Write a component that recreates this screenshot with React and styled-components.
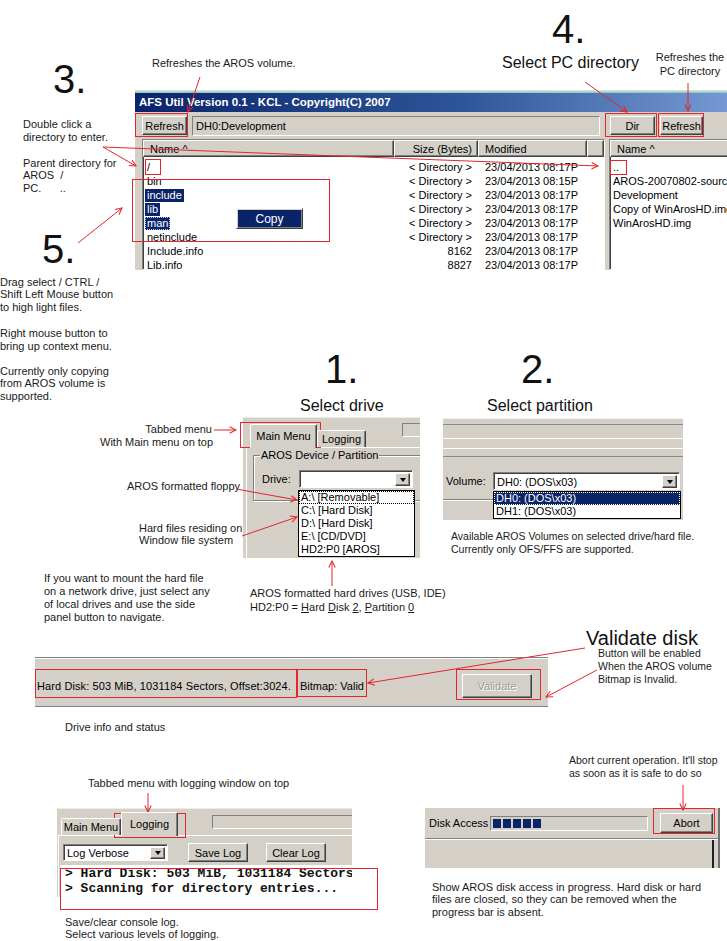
import React from "react";
import styled, { createGlobalStyle, css } from "styled-components";

const RED = "#e2262c";
const FACE = "#d4d0c8";
const NAVY = "#0a246a";

const GlobalStyle = createGlobalStyle`
  html, body { margin: 0; padding: 0; background: #fff; }
  body { font-family: "Liberation Sans", Arial, sans-serif; font-size: 11px; color: #000; }
  * { box-sizing: border-box; }
`;

const raised = css`
  background: ${FACE};
  border: 1px solid;
  border-color: #fff #404040 #404040 #fff;
  box-shadow: inset -1px -1px 0 #808080;
`;

const sunken = css`
  border: 1px solid;
  border-color: #808080 #fff #fff #808080;
  box-shadow: inset 1px 1px 0 #404040;
`;

// ---------- canvas + annotations ----------

const Canvas = styled.div`
  position: relative;
  width: 727px;
  height: 941px;
  overflow: hidden;
  background: #fff;
`;

const Step = styled.div`
  position: absolute;
  left: ${(p) => p.$x}px;
  top: ${(p) => p.$y}px;
  font-size: 40px;
  line-height: 40px;
  color: #111;
`;

const Heading = styled.div`
  position: absolute;
  left: ${(p) => p.$x}px;
  top: ${(p) => p.$y}px;
  font-size: ${(p) => p.$fs || 16}px;
  line-height: ${(p) => (p.$fs || 16) + 2}px;
  color: #111;
  white-space: nowrap;
`;

const Note = styled.div`
  position: absolute;
  left: ${(p) => p.$x}px;
  top: ${(p) => p.$y}px;
  font-size: ${(p) => p.$fs || 11}px;
  line-height: ${(p) => p.$lh || 13}px;
  white-space: pre;
  color: #1a1a1a;
  text-align: ${(p) => p.$align || "left"};
  ${(p) => p.$w && css`width: ${p.$w}px;`}
`;

const Key = styled.span`
  text-decoration: underline;
  text-underline-offset: 1px;
`;

const RedBox = styled.div`
  position: absolute;
  left: ${(p) => p.$x}px;
  top: ${(p) => p.$y}px;
  width: ${(p) => p.$w}px;
  height: ${(p) => p.$h}px;
  border: 1px solid ${RED};
  pointer-events: none;
`;

const ArrowLayer = styled.svg`
  position: absolute;
  left: 0;
  top: 0;
  pointer-events: none;
`;

// ---------- shared win2000 widgets ----------

const Button = styled.div`
  ${raised};
  flex-shrink: 0;
  width: ${(p) => p.$w}px;
  height: ${(p) => p.$h || 19}px;
  margin-left: ${(p) => p.$ml || 0}px;
  margin-right: ${(p) => p.$mr || 0}px;
  display: flex;
  align-items: center;
  justify-content: center;
  font-size: 11px;
  color: ${(p) => (p.$disabled ? "#a19d95" : "#000")};
  text-shadow: ${(p) => (p.$disabled ? "1px 1px 0 #fff" : "none")};
`;

const Combo = styled.div`
  ${sunken};
  background: #fff;
  flex-shrink: 0;
  width: ${(p) => p.$w}px;
  height: ${(p) => p.$h || 18}px;
  display: flex;
  align-items: stretch;
  padding: 2px 2px 1px 3px;
  font-size: 11px;
`;

const ComboText = styled.span`
  flex: 1;
  display: flex;
  align-items: center;
  white-space: nowrap;
  overflow: hidden;
`;

const DropBtn = styled.span`
  ${raised};
  width: 15px;
  display: flex;
  align-items: center;
  justify-content: center;
  &::after {
    content: "";
    border-left: 3.5px solid transparent;
    border-right: 3.5px solid transparent;
    border-top: 4px solid #000;
  }
`;

const DropList = styled.div`
  position: absolute;
  left: ${(p) => p.$x}px;
  top: ${(p) => p.$y}px;
  width: ${(p) => p.$w}px;
  background: #fff;
  border: 1px solid #000;
  z-index: 3;
`;

const DropItem = styled.div`
  height: 13px;
  line-height: 13px;
  padding-left: 2px;
  font-size: 11px;
  white-space: nowrap;
  ${(p) =>
    p.$sel &&
    css`
      background: ${NAVY};
      color: #fff;
    `}
  ${(p) =>
    p.$focus &&
    css`
      outline: 1px dotted ${p.$sel ? "#fff" : "#000"};
      outline-offset: -1px;
    `}
`;

const Rule = styled.div`
  flex-shrink: 0;
  height: 1px;
  background: ${(p) => p.$c};
  margin-top: ${(p) => p.$mt || 0}px;
  width: ${(p) => (p.$w ? `${p.$w}px` : "auto")};
`;

const TabStrip = styled.div`
  position: relative;
  z-index: 1;
  height: 29px;
  display: flex;
  align-items: flex-end;
  padding-left: ${(p) => p.$pl}px;
`;

const Tab = styled.div`
  flex-shrink: 0;
  width: ${(p) => p.$w}px;
  height: ${(p) => (p.$active ? 24 : 17)}px;
  margin-bottom: ${(p) => (p.$active ? -1 : 0)}px;
  background: ${FACE};
  border-top: 1px solid #fff;
  border-left: 1px solid #fff;
  border-right: 1px solid #404040;
  box-shadow: inset -1px 0 0 #808080;
  border-radius: 2px 2px 0 0;
  display: flex;
  align-items: center;
  justify-content: center;
  padding-bottom: ${(p) => (p.$active ? 2 : 0)}px;
  font-size: 11px;
  white-space: nowrap;
`;

const TabField = styled.div`
  ${sunken};
  box-shadow: none;
  align-self: flex-start;
  flex-shrink: 0;
  margin-left: ${(p) => p.$ml}px;
  margin-top: ${(p) => p.$mt}px;
  width: ${(p) => p.$w}px;
  height: 14px;
`;

const TabPage = styled.div`
  flex: 1;
  margin-left: ${(p) => p.$ml}px;
  border-top: 1px solid #fff;
  border-left: 1px solid #fff;
  padding: 7px 0 0 ${(p) => p.$pl}px;
`;

// ---------- AFS main window ----------

const AppWindow = styled.div`
  position: absolute;
  left: 135px;
  top: 90px;
  width: 592px;
  height: 180px;
  background: ${FACE};
  display: flex;
  flex-direction: column;
  overflow: hidden;
`;

const FrameTop = styled.div`
  height: 3px;
  background: linear-gradient(#d6ebe7, #8fc3bd);
`;

const TitleBar = styled.div`
  height: 19px;
  padding-left: 4px;
  background: linear-gradient(90deg, #0a246a 0%, #2d5599 55%, #7599d2 100%);
  color: #fff;
  font-weight: bold;
  font-size: 11.5px;
  line-height: 19px;
  white-space: nowrap;
`;

const Toolbar = styled.div`
  height: 27px;
  display: flex;
  align-items: center;
  padding-left: 7px;
`;

const PathField = styled.div`
  ${sunken};
  box-shadow: none;
  flex-shrink: 0;
  width: 408px;
  height: 20px;
  margin-left: 5px;
  padding-left: 3px;
  display: flex;
  align-items: center;
  font-size: 11px;
`;

const Panes = styled.div`
  flex: 1;
  display: flex;
  padding-left: 7px;
  min-height: 0;
`;

const ListView = styled.div`
  ${sunken};
  position: relative;
  background: #fff;
  flex: 0 0 ${(p) => p.$w}px;
  margin-left: ${(p) => p.$ml || 0}px;
  overflow: hidden;
`;

const HeaderRow = styled.div`
  display: grid;
  grid-template-columns: ${(p) => p.$cols};
  height: 17px;
`;

const HeaderCell = styled.div`
  ${raised};
  display: flex;
  align-items: center;
  justify-content: ${(p) => (p.$right ? "flex-end" : "flex-start")};
  padding: 0 ${(p) => (p.$right ? 5 : 0)}px 0 ${(p) => p.$pl || 0}px;
  font-size: 11px;
  white-space: nowrap;
  overflow: hidden;
`;

const Rows = styled.div`
  padding-top: 3px;
`;

const Row = styled.div`
  display: grid;
  grid-template-columns: ${(p) => p.$cols};
  height: 14px;
  line-height: 14px;
  font-size: 11px;
  white-space: nowrap;
`;

const NameCell = styled.div`
  padding-left: ${(p) => p.$pl}px;
  overflow: hidden;
`;

const SizeCell = styled.div`
  text-align: right;
  padding-right: 6px;
`;

const DateCell = styled.div`
  padding-left: 7px;
  overflow: hidden;
`;

const Picked = styled.span`
  display: inline-block;
  height: 13px;
  line-height: 13px;
  margin-left: -2px;
  padding: 0 2px;
  background: ${NAVY};
  color: #fff;
  ${(p) =>
    p.$focus &&
    css`
      outline: 1px dotted #c8c8ff;
      outline-offset: -1px;
    `}
`;

const ContextMenu = styled.div`
  position: absolute;
  left: 93px;
  top: 68px;
  width: 67px;
  height: 21px;
  background: ${NAVY};
  color: #fff;
  border: 1px solid;
  border-color: #fff #404040 #404040 #fff;
  box-shadow: inset 1px 1px 0 ${FACE}, inset -1px -1px 0 #808080;
  display: flex;
  align-items: center;
  justify-content: center;
  font-size: 12px;
`;

// ---------- step 1 : drive ----------

const DriveShot = styled.div`
  position: absolute;
  left: 243px;
  top: 417px;
  width: 177px;
  height: 141px;
  background: ${FACE};
  border-top: 1px solid #ecebe6;
  display: flex;
  flex-direction: column;
  overflow: hidden;
`;

const GroupBox = styled.div`
  position: relative;
  width: 200px;
  height: 46px;
  border: 1px solid #808080;
  box-shadow: inset 1px 1px 0 #fff, 1px 1px 0 #fff;
  padding: 14px 0 0 8px;
  display: flex;
  align-items: flex-start;
`;

const GroupLegend = styled.span`
  position: absolute;
  left: 6px;
  top: -7px;
  padding: 0 1px;
  background: ${FACE};
  font-size: 11px;
  line-height: 13px;
  white-space: nowrap;
`;

const FieldLabel = styled.span`
  flex-shrink: 0;
  width: ${(p) => p.$w}px;
  padding-left: ${(p) => p.$pl || 0}px;
  height: 18px;
  line-height: 18px;
  font-size: 11px;
`;

// ---------- step 2 : volume ----------

const VolumeShot = styled.div`
  position: absolute;
  left: 443px;
  top: 418px;
  width: 240px;
  height: 102px;
  background: ${FACE};
  display: flex;
  flex-direction: column;
  overflow: hidden;
`;

const VolumeRow = styled.div`
  display: flex;
  align-items: center;
  margin-top: 15px;
  height: 18px;
`;

// ---------- status bar ----------

const StatusShot = styled.div`
  position: absolute;
  left: 35px;
  top: 657px;
  width: 513px;
  height: 51px;
  background: ${FACE};
  display: flex;
  flex-direction: column;
`;

const StatusRow = styled.div`
  display: flex;
  align-items: center;
  height: 25px;
  margin-top: 14px;
  padding-left: 2px;
  font-size: 11px;
  white-space: nowrap;
`;

const InfoText = styled.span`
  width: 263px;
  flex-shrink: 0;
  letter-spacing: 0.1px;
`;

const Spring = styled.div`
  flex: 1;
`;

// ---------- logging ----------

const LogShot = styled.div`
  position: absolute;
  left: 57px;
  top: 808px;
  width: 295px;
  height: 89px;
  background: ${FACE};
  border-top: 1px solid #ecebe6;
  display: flex;
  flex-direction: column;
  overflow: hidden;
`;

const Controls = styled.div`
  display: flex;
  align-items: center;
  height: 19px;
`;

const Console = styled.div`
  margin: 3px 0 0 -3px;
  height: 32px;
  background: #fff;
  padding: 1px 0 0 5px;
  font-family: "Liberation Mono", "Courier New", monospace;
  font-weight: bold;
  font-size: 13px;
  line-height: 15px;
  white-space: pre;
  color: #111;
`;

// ---------- disk access ----------

const AccessShot = styled.div`
  position: absolute;
  left: 425px;
  top: 808px;
  width: 295px;
  height: 60px;
  background: ${FACE};
  border-right: 2px solid #707070;
  display: flex;
  flex-direction: column;
`;

const AccessRow = styled.div`
  height: 30px;
  display: flex;
  align-items: center;
  padding-left: 4px;
  font-size: 11px;
  white-space: nowrap;
`;

const Progress = styled.div`
  ${sunken};
  box-shadow: none;
  width: 158px;
  height: 15px;
  display: flex;
  gap: 2px;
  padding: 2px;
`;

const Block = styled.span`
  width: 8px;
  background: ${NAVY};
`;

const AccessFoot = styled.div`
  flex: 1;
  width: 289px;
  border-right: 2px solid #202020;
`;

// ---------- data ----------

const LEFT_COLS = "251px 84px 109px 1fr";
const DIR = "< Directory >";

const leftRows = [
  { name: "/", size: DIR, date: "23/04/2013 08:17P" },
  { name: "bin", size: DIR, date: "23/04/2013 08:15P" },
  { name: "include", size: DIR, date: "23/04/2013 08:17P", sel: true },
  { name: "lib", size: DIR, date: "23/04/2013 08:17P", sel: true },
  { name: "man", size: DIR, date: "23/04/2013 08:17P", sel: true, focus: true },
  { name: "netinclude", size: DIR, date: "23/04/2013 08:17P" },
  { name: "Include.info", size: "8162", date: "23/04/2013 08:17P" },
  { name: "Lib.info", size: "8827", date: "23/04/2013 08:17P" },
];

const rightRows = ["..", "AROS-20070802-source", "Development", "Copy of WinArosHD.img", "WinArosHD.img"];

const drives = ["A:\\ [Removable]", "C:\\ [Hard Disk]", "D:\\ [Hard Disk]", "E:\\ [CD/DVD]", "HD2:P0 [AROS]"];

const arrows = [
  [200, 77, 188, 112],
  [585, 82, 627, 112],
  [688, 83, 688, 111],
  [103, 147, 598, 166],
  [103, 147, 136, 166],
  [78, 243, 122, 208],
  [214, 430, 236, 430],
  [236, 489, 297, 500],
  [242, 536, 297, 517],
  [332, 586, 332, 561],
  [585, 648, 368, 683],
  [597, 670, 546, 697],
  [148, 793, 148, 812],
  [683, 785, 683, 810],
];

const boxes = [
  [135, 113, 53, 24],
  [145, 159, 16, 16],
  [132, 179, 198, 63],
  [605, 113, 52, 24],
  [658, 113, 46, 24],
  [610, 160, 17, 15],
  [240, 422, 81, 26],
  [300, 505, 80, 26],
  [300, 543, 79, 14],
  [35, 669, 262, 29],
  [297, 669, 70, 28],
  [456, 669, 85, 31],
  [114, 813, 72, 25],
  [60, 868, 318, 42],
  [653, 808, 62, 26],
];

// ---------- app ----------

export default function App() {
  return (
    <>
      <GlobalStyle />
      <Canvas>
        <Step $x={552} $y={9}>4.</Step>
        <Step $x={53} $y={59}>3.</Step>
        <Step $x={42} $y={229}>5.</Step>
        <Step $x={325} $y={349}>1.</Step>
        <Step $x={521} $y={349}>2.</Step>

        <Heading $x={502} $y={54}>Select PC directory</Heading>
        <Heading $x={300} $y={397}>Select drive</Heading>
        <Heading $x={487} $y={397}>Select partition</Heading>
        <Heading $x={586} $y={627} $fs={20}>Validate disk</Heading>

        <Note $x={152} $y={57}>Refreshes the AROS volume.</Note>
        <Note $x={652} $y={50} $w={76} $lh={14} $align="center">{"Refreshes the\nPC directory"}</Note>
        <Note $x={23} $y={117.5}>{"Double click a\ndirectory to enter."}</Note>
        <Note $x={23} $y={156.5} $lh={12.5}>{"Parent directory for\nAROS  /\nPC.      .."}</Note>
        <Note $x={0} $y={275.5} $lh={12.5}>{"Drag select / CTRL /\nShift Left Mouse button\nto high light files."}</Note>
        <Note $x={0} $y={326.5}>{"Right mouse button to\nbring up context menu."}</Note>
        <Note $x={0} $y={364.5} $lh={12.5}>{"Currently only copying\nfrom AROS volume is\nsupported."}</Note>
        <Note $x={100} $y={422.5} $w={112} $align="right">{"Tabbed menu\nWith Main menu on top"}</Note>
        <Note $x={127} $y={479.5}>AROS formatted floppy</Note>
        <Note $x={139} $y={521.5} $lh={12.5}>{"Hard files residing on\nWindow file system"}</Note>
        <Note $x={250} $y={586} $lh={14}>
          {"AROS formatted hard drives (USB, IDE)\nHD2:P0 = "}
          <Key>H</Key>ard <Key>D</Key>isk <Key>2</Key>, <Key>P</Key>artition <Key>0</Key>
        </Note>
        <Note $x={44} $y={571.5}>
          {"If you want to mount the hard file\non a network drive, just select any\nof local drives and use the side\npanel button to navigate."}
        </Note>
        <Note $x={451} $y={530} $fs={10.5} $lh={12.5}>
          {"Available AROS Volumes on selected drive/hard file.\nCurrently only OFS/FFS are supported."}
        </Note>
        <Note $x={598} $y={646.5} $fs={10.5}>{"Button will be enabled\nWhen the AROS volume\nBitmap is Invalid."}</Note>
        <Note $x={65} $y={720.5}>Drive info and status</Note>
        <Note $x={569} $y={753.5} $fs={10.5}>{"Abort current operation. It'll stop\nas soon as it is safe to do so"}</Note>
        <Note $x={88} $y={776.5}>Tabbed menu with logging window on top</Note>
        <Note $x={432} $y={880.5} $lh={12.5}>
          {"Show AROS disk access in progress. Hard disk or hard\nfiles are closed, so they can be removed when the\nprogress bar is absent."}
        </Note>
        <Note $x={65} $y={915.5} $lh={12}>{"Save/clear console log.\nSelect various levels of logging."}</Note>

        <AppWindow>
          <FrameTop />
          <TitleBar>AFS Util Version 0.1 - KCL - Copyright(C) 2007</TitleBar>
          <Toolbar>
            <Button $w={45}>Refresh</Button>
            <PathField>DH0:Development</PathField>
            <Button $w={45} $ml={10}>Dir</Button>
            <Button $w={43} $ml={5}>Refresh</Button>
          </Toolbar>
          <Panes>
            <ListView $w={463}>
              <HeaderRow $cols={LEFT_COLS}>
                <HeaderCell $pl={6}>Name ^</HeaderCell>
                <HeaderCell $right>Size (Bytes)</HeaderCell>
                <HeaderCell $pl={6}>Modified</HeaderCell>
                <HeaderCell />
              </HeaderRow>
              <Rows>
                {leftRows.map((r) => (
                  <Row key={r.name} $cols={LEFT_COLS}>
                    <NameCell $pl={4}>
                      {r.sel ? <Picked $focus={r.focus}>{r.name}</Picked> : r.name}
                    </NameCell>
                    <SizeCell>{r.size}</SizeCell>
                    <DateCell>{r.date}</DateCell>
                    <div />
                  </Row>
                ))}
              </Rows>
              <ContextMenu>Copy</ContextMenu>
            </ListView>
            <ListView $w={130} $ml={4}>
              <HeaderRow $cols="1fr">
                <HeaderCell $pl={6}>Name ^</HeaderCell>
              </HeaderRow>
              <Rows>
                {rightRows.map((n) => (
                  <Row key={n} $cols="1fr">
                    <NameCell $pl={3}>{n}</NameCell>
                  </Row>
                ))}
              </Rows>
            </ListView>
          </Panes>
        </AppWindow>

        <DriveShot>
          <TabStrip $pl={7}>
            <Tab $active $w={67}>Main Menu</Tab>
            <Tab $w={49}>Logging</Tab>
            <TabField $ml={36} $mt={5} $w={30} />
          </TabStrip>
          <TabPage $ml={3} $pl={6}>
            <GroupBox>
              <GroupLegend>AROS Device / Partition</GroupLegend>
              <FieldLabel $w={37}>Drive:</FieldLabel>
              <Combo $w={114}>
                <ComboText />
                <DropBtn />
              </Combo>
            </GroupBox>
          </TabPage>
          <DropList $x={55} $y={72} $w={117}>
            {drives.map((d, i) => (
              <DropItem key={d} $focus={i === 0}>{d}</DropItem>
            ))}
          </DropList>
        </DriveShot>

        <VolumeShot>
          <Rule $c="#f4f3f0" />
          <Rule $c="#8a8a8a" $mt={5} />
          <Rule $c="#fff" $mt={13} />
          <Rule $c="#fff" $mt={9} />
          <Rule $c="#8a8a8a" $mt={7} />
          <VolumeRow>
            <FieldLabel $w={50} $pl={3}>Volume:</FieldLabel>
            <Combo $w={187}>
              <ComboText>DH0: (DOS\x03)</ComboText>
              <DropBtn />
            </Combo>
          </VolumeRow>
          <Rule $c="#808080" $mt={9} $w={50} />
          <Rule $c="#fff" $w={50} />
          <DropList $x={50} $y={73} $w={188}>
            <DropItem $sel $focus>DH0: (DOS\x03)</DropItem>
            <DropItem>DH1: (DOS\x03)</DropItem>
          </DropList>
        </VolumeShot>

        <StatusShot>
          <Rule $c="#808080" />
          <Rule $c="#fff" />
          <StatusRow>
            <InfoText>Hard Disk: 503 MiB, 1031184 Sectors, Offset:3024.</InfoText>
            <span>Bitmap: Valid</span>
            <Spring />
            <Button $w={70} $h={24} $mr={16} $disabled>Validate</Button>
          </StatusRow>
          <Rule $c="#808080" $mt={8} />
          <Rule $c="#fff" />
        </StatusShot>

        <LogShot>
          <TabStrip $pl={4}>
            <Tab $w={60}>Main Menu</Tab>
            <Tab $active $w={57}>Logging</Tab>
            <TabField $ml={34} $mt={6} $w={160} />
          </TabStrip>
          <TabPage $ml={1} $pl={4}>
            <Controls>
              <Combo $w={105} $h={17}>
                <ComboText>Log Verbose</ComboText>
                <DropBtn />
              </Combo>
              <Button $w={60} $ml={20}>Save Log</Button>
              <Button $w={60} $ml={18}>Clear Log</Button>
            </Controls>
            <Console>{"> Hard Disk: 503 MiB, 1031184 Sectors\n> Scanning for directory entries..."}</Console>
          </TabPage>
        </LogShot>

        <AccessShot>
          <AccessRow>
            <FieldLabel $w={61}>Disk Access</FieldLabel>
            <Progress>
              {[0, 1, 2, 3, 4].map((i) => (
                <Block key={i} />
              ))}
            </Progress>
            <Button $w={53} $h={20} $ml={12}>Abort</Button>
          </AccessRow>
          <Rule $c="#808080" />
          <Rule $c="#fff" />
          <AccessFoot />
        </AccessShot>

        {boxes.map(([x, y, w, h]) => (
          <RedBox key={`${x}-${y}`} $x={x} $y={y} $w={w} $h={h} />
        ))}

        <ArrowLayer width="727" height="941" viewBox="0 0 727 941">
          <defs>
            <marker
              id="head"
              viewBox="0 0 10 10"
              refX="9"
              refY="5"
              markerWidth="8"
              markerHeight="8"
              markerUnits="userSpaceOnUse"
              orient="auto"
            >
              <path d="M1 1 L9 5 L1 9" fill="none" stroke={RED} strokeWidth="1.3" />
            </marker>
          </defs>
          {arrows.map(([x1, y1, x2, y2]) => (
            <line
              key={`${x1}-${y1}-${x2}`}
              x1={x1}
              y1={y1}
              x2={x2}
              y2={y2}
              stroke={RED}
              strokeWidth="1"
              markerEnd="url(#head)"
            />
          ))}
        </ArrowLayer>
      </Canvas>
    </>
  );
}
